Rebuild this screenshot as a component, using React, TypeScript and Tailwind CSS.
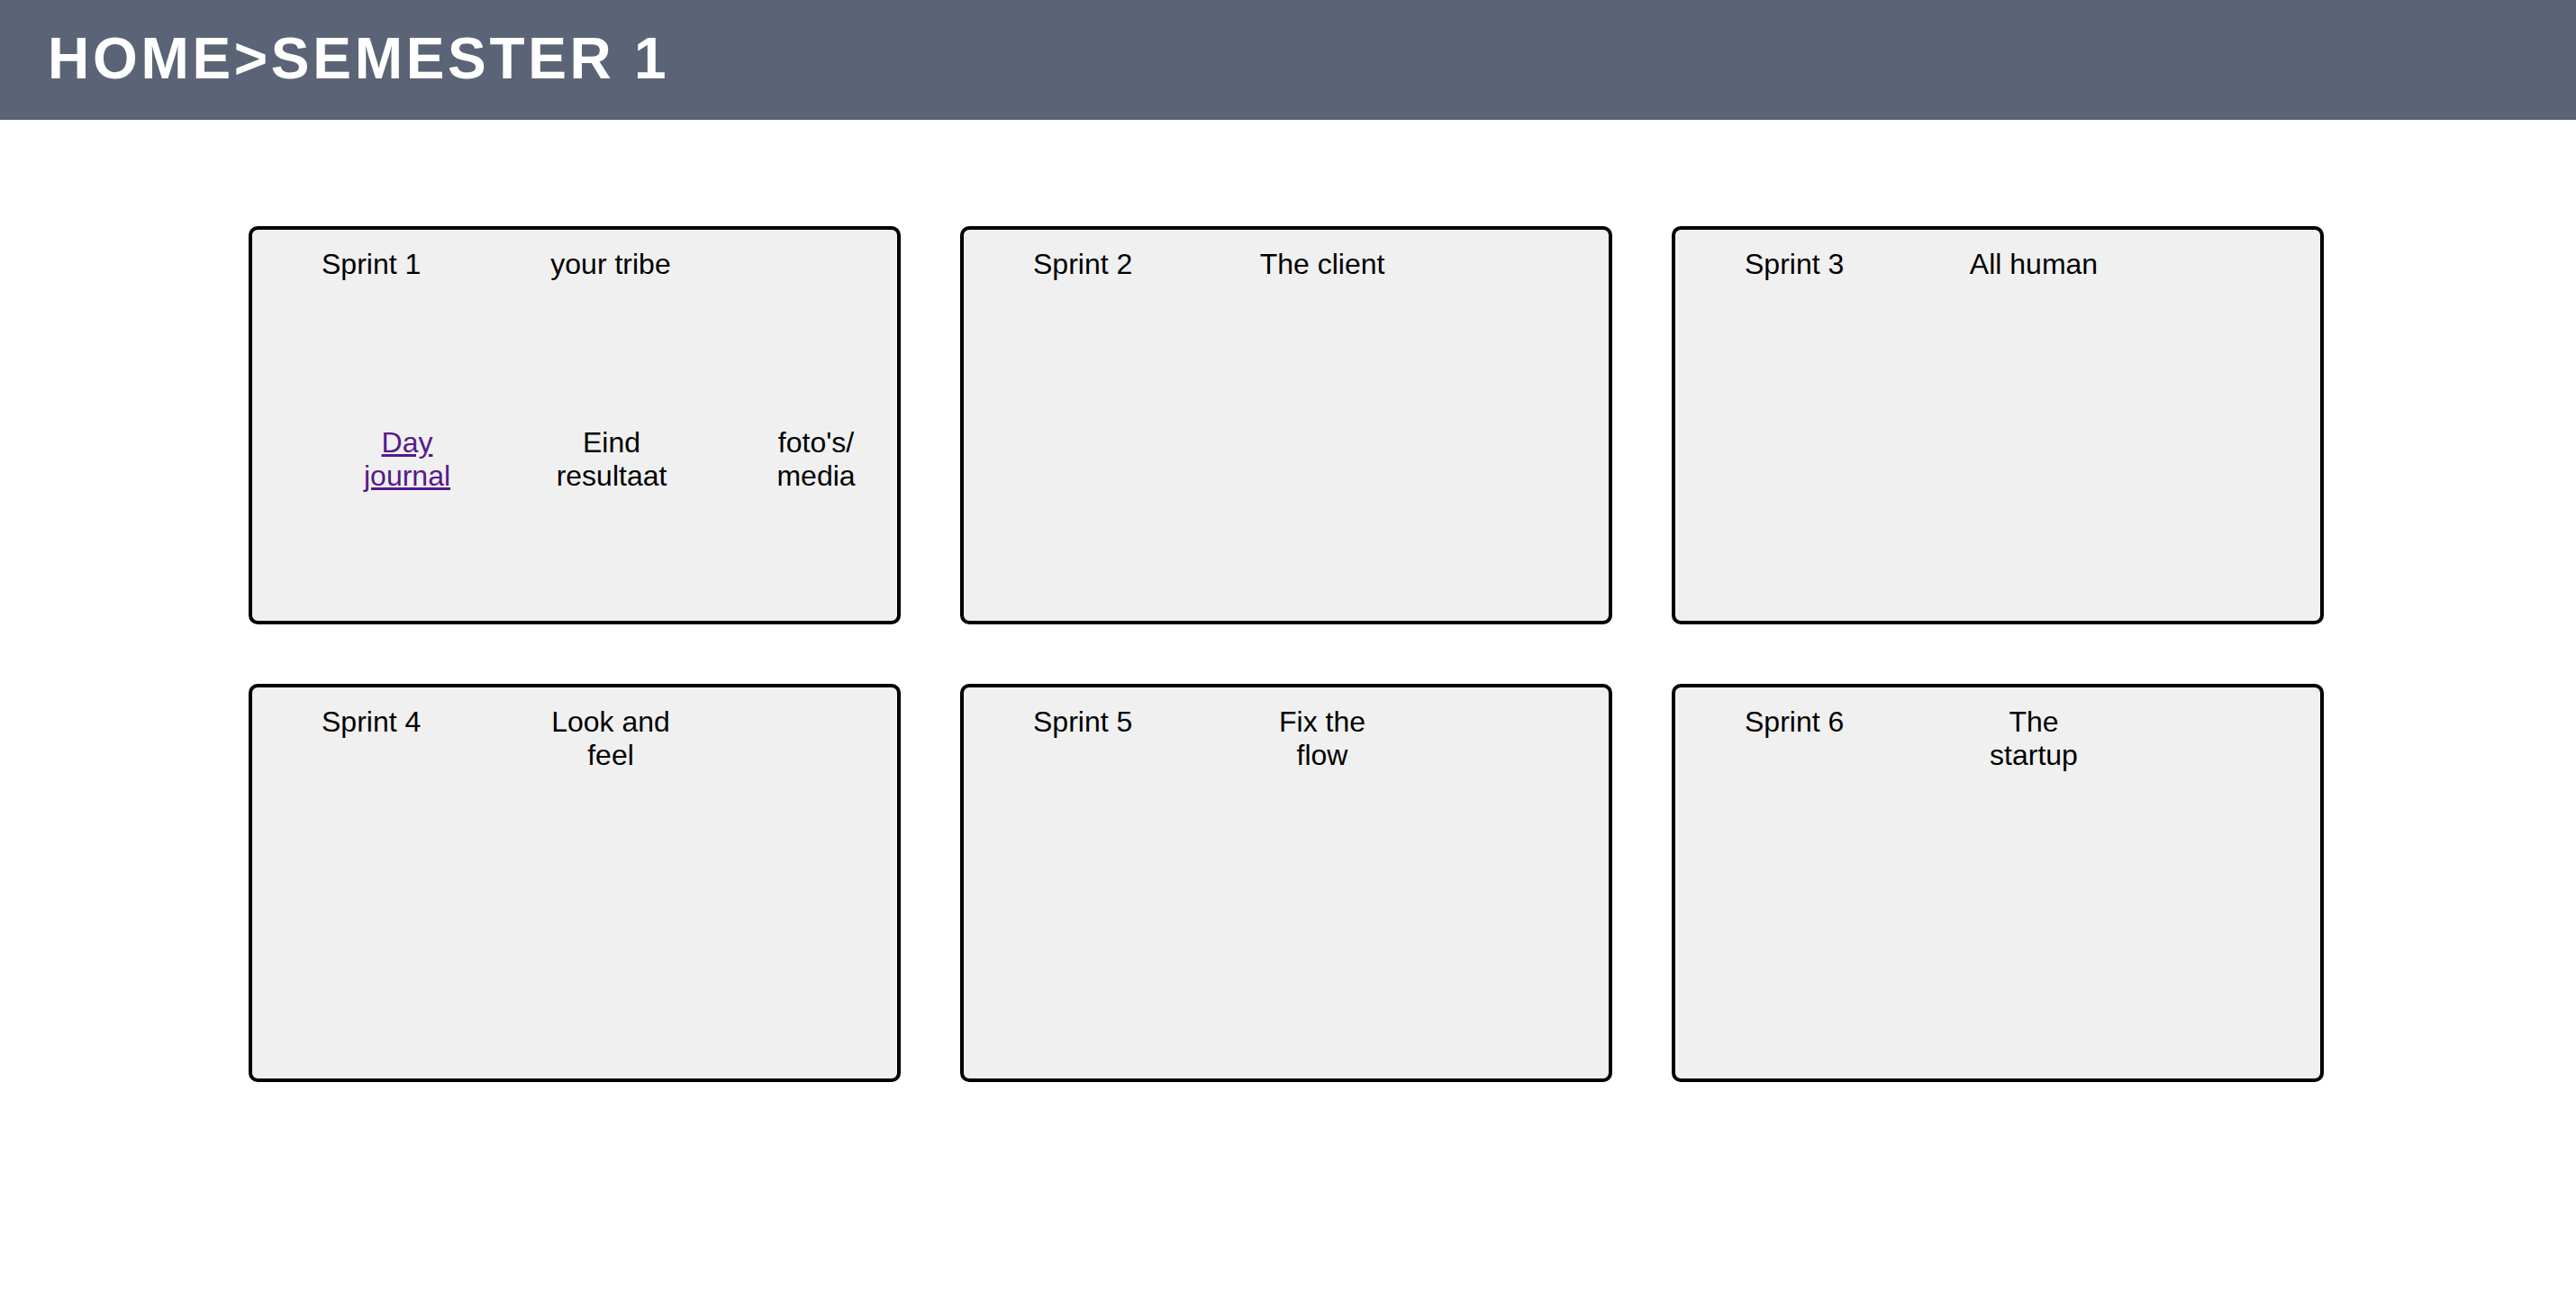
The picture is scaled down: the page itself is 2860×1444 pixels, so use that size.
const sprints = [
  { name: "Sprint 1", theme: "your tribe", items: true },
  { name: "Sprint 2", theme: "The client" },
  { name: "Sprint 3", theme: "All human" },
  { name: "Sprint 4", theme: "Look and feel" },
  { name: "Sprint 5", theme: "Fix the flow" },
  { name: "Sprint 6", theme: "The startup" },
];

function SprintCard({ name, theme, items }: { name: string; theme: string; items?: boolean }) {
  return (
    <div className="h-[442px] rounded-[10px] border-4 border-black bg-[#f0f0f0] pt-[20px]">
      <div className="flex items-start">
        <div className="w-[323px] pl-[77px]">{name}</div>
        <div className="w-[150px] text-center">{theme}</div>
      </div>

      {items && (
        <div className="mt-[161px] grid grid-cols-[150px_150px_150px] gap-x-[77px] pl-[97px] text-center">
          <div>
            <a href="#" className="text-[#551a8b] underline">
              Day journal
            </a>
          </div>
          <div>Eind resultaat</div>
          <div>foto's/ media</div>
        </div>
      )}
    </div>
  );
}

export default function App() {
  return (
    <div className="min-h-screen bg-white font-['Liberation_Sans',Arial,sans-serif] text-[32px] leading-[1.15] text-black">
      <header className="flex h-[133px] items-center bg-[#5b6476] px-[53px]">
        <h1 className="-mt-[3px] text-[64px] font-bold leading-none tracking-[3.7px] text-white">
          HOME&gt;SEMESTER 1
        </h1>
      </header>

      <main className="mt-[118px] grid grid-cols-[724px_724px_724px] gap-x-[66px] gap-y-[66px] pl-[276px]">
        {sprints.map((s) => (
          <SprintCard key={s.name} {...s} />
        ))}
      </main>
    </div>
  );
}
